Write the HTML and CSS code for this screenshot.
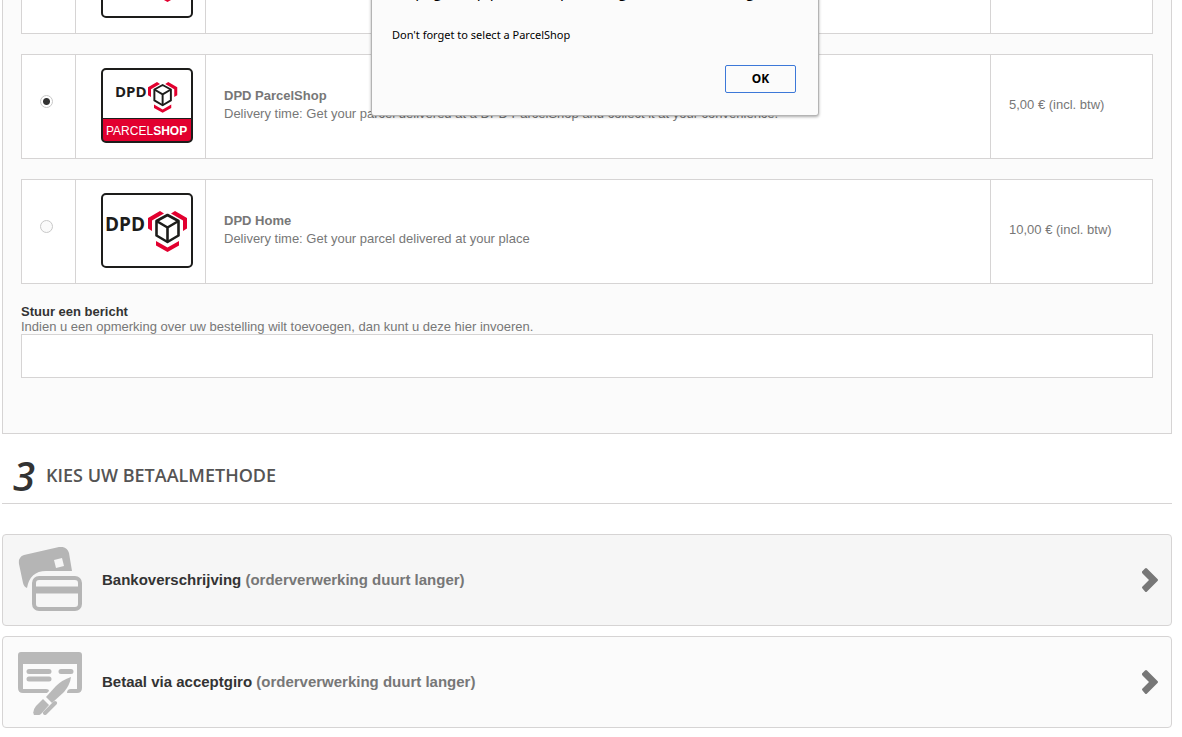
FILE: index.html
```html
<!DOCTYPE html>
<html lang="nl">
<head>
<meta charset="utf-8">
<title>Bestellen</title>
<link rel="stylesheet" href="styles.css">
</head>
<body>
<svg class="defs" aria-hidden="true">
  <symbol id="cube" viewBox="0 0 40 42">
    <g fill="#e2002f">
      <path d="M0 8 12 1l4 2.500L4 10.500V21l-4-2.500z"/>
      <path d="M39 8 27 1l-4 2.500 12 7V21l4-2.500z"/>
      <path d="M8 31v4.500l11.500 6.500L31 35.500V31l-11.500 6.500z"/>
    </g>
    <g fill="#fff" stroke="#1d1d1b" stroke-width="2.600" stroke-linejoin="round">
      <path d="M19.500 5 30.500 11v14.500l-11 6.500-11-6.500V11z"/>
      <path d="M8.500 11l11 6.500 11-6.500M19.500 17.500V32" fill="none"/>
    </g>
  </symbol>
  <symbol id="chevron" viewBox="0 0 16 24">
    <path d="M0 3.500 3 .5q1-1 2 0L15.500 11q1 1 0 2L5 23.500q-1 1-2 0L.5 20.500q-1-1 0-2L7 12 .5 5.500q-1-1-.5-2z" fill="#777"/>
  </symbol>
</svg>

<main class="page">
  <section class="panel">
    <div class="option">
      <div class="cell pick"><input type="radio" name="carrier" aria-label="DPD Classic"></div>
      <div class="cell logo">
        <svg viewBox="0 0 92 75" role="img" aria-label="DPD">
          <rect x="1" y="1" width="90" height="73" rx="4" fill="#fff" stroke="#1d1d1b" stroke-width="2"/>
          <use href="#cube" x="47" y="17" width="40" height="42"/>
        </svg>
      </div>
      <div class="cell info"><strong>DPD Classic</strong><span>De beste prijs en snelheid</span></div>
      <div class="cell price">0,00 € (incl. btw)</div>
    </div>

    <div class="option">
      <div class="cell pick"><input type="radio" name="carrier" aria-label="DPD ParcelShop" checked></div>
      <div class="cell logo">
        <svg viewBox="0 0 92 75" role="img" aria-label="DPD ParcelShop">
          <rect x="1" y="1" width="90" height="73" rx="4" fill="#fff"/>
          <path d="M1 51h90v19a4 4 0 0 1-4 4H5a4 4 0 0 1-4-4z" fill="#e2002f"/>
          <path d="M1 50.500h90" stroke="#1d1d1b"/>
          <rect x="1" y="1" width="90" height="73" rx="4" fill="none" stroke="#1d1d1b" stroke-width="2"/>
          <text class="brand" x="14" y="29" font-size="15">DPD</text>
          <use href="#cube" x="47" y="13" width="30" height="32"/>
          <text class="shop" x="5" y="67" font-size="12">PARCEL<tspan font-weight="700">SHOP</tspan></text>
        </svg>
      </div>
      <div class="cell info"><strong>DPD ParcelShop</strong><span>Delivery time: Get your parcel delivered at a DPD ParcelShop and collect it at your convenience.</span></div>
      <div class="cell price">5,00 € (incl. btw)</div>
    </div>

    <div class="option">
      <div class="cell pick"><input type="radio" name="carrier" aria-label="DPD Home"></div>
      <div class="cell logo">
        <svg viewBox="0 0 92 75" role="img" aria-label="DPD Home">
          <rect x="1" y="1" width="90" height="73" rx="4" fill="#fff" stroke="#1d1d1b" stroke-width="2"/>
          <text class="brand" x="4" y="38" font-size="19">DPD</text>
          <use href="#cube" x="47" y="17" width="40" height="42"/>
        </svg>
      </div>
      <div class="cell info"><strong>DPD Home</strong><span>Delivery time: Get your parcel delivered at your place</span></div>
      <div class="cell price">10,00 € (incl. btw)</div>
    </div>

    <div class="message">
      <strong>Stuur een bericht</strong>
      <label for="message">Indien u een opmerking over uw bestelling wilt toevoegen, dan kunt u deze hier invoeren.</label>
      <textarea id="message"></textarea>
    </div>
  </section>

  <h1 class="step"><span class="number">3</span><span>KIES UW BETAALMETHODE</span></h1>

  <nav class="payments">
    <a class="payment active" href="#bank">
      <svg class="icon" viewBox="0 0 64 66" aria-hidden="true">
        <path d="M6 8 41 0q8-1 10 6l3 18H28q-16 0-19 17-3-1-4-5L1 17q-1-7 5-9z" fill="#b5b5b5"/>
        <path d="m36 13 8-2 2 8-8 2z" fill="#f6f6f6"/>
        <rect x="16" y="31" width="46" height="31" rx="5" fill="#f6f6f6" stroke="#b5b5b5" stroke-width="4"/>
        <path d="M16 43h46" stroke="#b5b5b5" stroke-width="7"/>
      </svg>
      <span class="name">Bankoverschrijving <span>(orderverwerking duurt langer)</span></span>
      <svg class="chevron" aria-hidden="true"><use href="#chevron"/></svg>
    </a>
    <a class="payment" href="#acceptgiro">
      <svg class="icon" viewBox="0 0 64 66" aria-hidden="true">
        <path d="M3 3h58q3 0 3 3v33q0 5-5 5H49q0-4 4-4h6V15H5v25h23q3 0 3 2l-2 2H5q-5 0-5-5V6q0-3 3-3z" fill="#b9b9b9"/>
        <path d="M11 22.500h20M11 30h20M43 22.500h10" stroke="#b9b9b9" stroke-width="5" stroke-linecap="round"/>
        <path d="M53 28q-1 8-7 15L34 54l-6-6 10-11q6-6 15-9z" fill="#b9b9b9"/>
        <path d="m25 50 6 6-7 8q-4 4-8 2-2-4 2-9z" fill="#b9b9b9"/>
        <path d="M37 54 27 64" stroke="#b9b9b9" stroke-width="4" stroke-linecap="round"/>
      </svg>
      <span class="name">Betaal via acceptgiro <span>(orderverwerking duurt langer)</span></span>
      <svg class="chevron" aria-hidden="true"><use href="#chevron"/></svg>
    </a>
  </nav>
</main>

<div class="dialog" role="alertdialog" aria-labelledby="dialog-title">
  <div class="dialog-title" id="dialog-title">De pagina op prestashop-hosting.be meldt het volgende:</div>
  <p>Don't forget to select a ParcelShop</p>
  <div class="actions"><button type="button">OK</button></div>
</div>
</body>
</html>
```
FILE: styles.css
```css
* {
  box-sizing: border-box;
}

body {
  margin: 0;
  overflow: hidden;
  background: #fff;
  color: #777;
  font: 13px/18px "Liberation Sans", Arial, sans-serif;
}

.defs {
  position: absolute;
  width: 0;
  height: 0;
}

.page {
  margin: -90px 10px 0 2px;
}

.panel {
  display: flex;
  flex-direction: column;
  gap: 20px;
  padding: 18px 18px 55px;
  border: 1px solid #d6d4d4;
  background: #fbfbfb;
}

.option {
  display: grid;
  grid-template-columns: 53px 130px 1fr 162px;
  height: 105px;
  border: 1px solid #d6d4d4;
  background: #fff;
}

.cell {
  display: flex;
  align-items: center;
}

.cell + .cell {
  border-left: 1px solid #d6d4d4;
}

.pick {
  padding: 0 18px 10px;
}

.pick input {
  appearance: none;
  width: 13px;
  height: 13px;
  margin: 0;
  border: 1px solid #c8c8c8;
  border-radius: 50%;
  background: #fafafa;
}

.pick input:checked {
  background: radial-gradient(circle, #333 3px, #fff 4px);
}

.logo {
  padding: 0 0 2px 25px;
}

.logo svg {
  width: 92px;
  height: 75px;
}

.brand {
  fill: #1d1d1b;
  font-family: "Open Sans", sans-serif;
  font-weight: 700;
}

.shop {
  fill: #fff;
  font-family: "Liberation Sans", Arial, sans-serif;
}

.info {
  flex-direction: column;
  align-items: flex-start;
  justify-content: center;
  padding: 0 18px 4px;
}

.price {
  padding: 0 18px 4px;
}

.message {
  display: flex;
  flex-direction: column;
  line-height: 15px;
}

.message strong {
  color: #333;
}

.message textarea {
  height: 44px;
  border: 1px solid #d6d4d4;
  background: #fff;
  resize: none;
}

.step {
  display: flex;
  align-items: center;
  gap: 11px;
  height: 70px;
  margin: 0 0 30px;
  padding: 0 12px 0 11px;
  border-bottom: 1px solid #d6d4d4;
  color: #555454;
  font: 600 18px/24px "Open Sans", sans-serif;
}

.step span {
  padding-top: 12px;
}

.step .number {
  padding-top: 14px;
  color: #333;
  font: italic 600 40px/40px "Open Sans", sans-serif;
}

.payments {
  display: flex;
  flex-direction: column;
  gap: 10px;
}

.payment {
  display: flex;
  align-items: center;
  height: 92px;
  padding: 0 13px 0 15px;
  border: 1px solid #d6d4d4;
  border-radius: 4px;
  background: #fbfbfb;
  color: #333;
  font-size: 15px;
  font-weight: 700;
  text-decoration: none;
}

.payment.active {
  background: #f6f6f6;
}

.icon {
  width: 64px;
  height: 66px;
}

.name {
  flex: 1;
  padding-left: 20px;
}

.name span {
  color: #777;
}

.chevron {
  width: 16px;
  height: 24px;
}

.dialog {
  position: absolute;
  top: -19px;
  left: calc(50% - 220px);
  width: 448px;
  padding: 0 22px 22px 20px;
  border: 1px solid #b4b4b4;
  border-radius: 3px;
  background: #fbfbfb;
  box-shadow: 0 1px 3px #00000055;
  color: #000;
  font: 11px/18px "Noto Sans", sans-serif;
}

.dialog-title {
  font-size: 15px;
  line-height: 18px;
  white-space: nowrap;
}

.dialog p {
  margin: 26px 0 21px;
}

.actions {
  display: flex;
  justify-content: flex-end;
}

.actions button {
  width: 71px;
  height: 28px;
  padding: 0;
  border: 1px solid #3c78d8;
  border-radius: 2px;
  background: #fbfbfb;
  color: #000;
  font: 700 12px/18px "Noto Sans", sans-serif;
}
```
